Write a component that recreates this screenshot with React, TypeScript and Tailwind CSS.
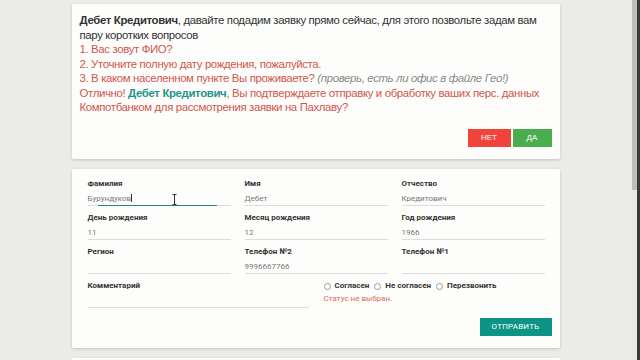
import React from "react";

const Field = ({ label, value, focused }: { label: string; value?: string; focused?: boolean }) => (
  <div className="flex flex-col">
    <div className="text-[8px] font-bold leading-[10px] text-[#333]">{label}</div>
    <div className="relative mt-[4px] h-[13px] border-b border-[#dcdcdc] text-[8px] leading-[12px] text-[#777]">
      <span>{value ?? "\u00a0"}</span>
      {focused && (
        <>
          <span className="inline-block h-[8px] w-px bg-[#333] align-[-1px]" />
          <div className="absolute left-[10px] bottom-[-1px] h-[1px] w-[119px] bg-[#26877c]" />
          <svg className="absolute left-[84px] top-[1px]" width="5" height="11" viewBox="0 0 5 11">
            <path d="M0.5 0.5h4M2.5 0.5v10M0.5 10.5h4" stroke="#333" strokeWidth="1" fill="none" />
          </svg>
        </>
      )}
    </div>
  </div>
);

const Radio = ({ label }: { label: string }) => (
  <div className="flex items-center gap-[4px]">
    <span className="inline-block h-[7px] w-[7px] rounded-full border border-[#9a9a9a] bg-white" />
    <span className="text-[8px] font-bold leading-[10px] text-[#333]">{label}</span>
  </div>
);

export default function App() {
  return (
    <div className="flex h-[360px] w-[640px] overflow-hidden bg-[#ebecea]">
      <div className="flex w-[631px] flex-col items-center gap-[10px] pt-[4px]">
        <div
          className="w-[488px] rounded-[2px] bg-[#fdfdfc] px-[8px] pb-[12px] pt-[9px] text-[11.4px] leading-[14.5px] tracking-[-0.35px] shadow-[0_1px_3px_rgba(0,0,0,0.18)]"
          style={{ fontFamily: '"Liberation Sans", Arial, sans-serif' }}
        >
          <div className="text-[#333]">
            <b>Дебет Кредитович</b>, давайте подадим заявку прямо сейчас, для этого позвольте задам вам пару коротких вопросов
          </div>
          <div className="text-[#d0564b]">1. Вас зовут ФИО?</div>
          <div className="text-[#d0564b]">2. Уточните полную дату рождения, пожалуйста.</div>
          <div className="text-[#d0564b]">
            3. В каком населенном пункте Вы проживаете?{" "}
            <i className="text-[#8a8a8a]">(проверь, есть ли офис в файле Гео!)</i>
          </div>
          <div className="text-[#d0564b]">
            Отлично! <b className="text-[#1f9488]">Дебет Кредитович</b>, Вы подтверждаете отправку и обработку ваших перс. данных Компотбанком для рассмотрения заявки на Пахлаву?
          </div>
          <div className="mt-[14.5px] flex justify-end gap-[2px] tracking-normal">
            <div className="flex h-[18px] w-[43px] items-center justify-center bg-[#f0443a] text-[8px] text-white">НЕТ</div>
            <div className="flex h-[18px] w-[39px] items-center justify-center bg-[#4aad4e] text-[8px] text-white">ДА</div>
          </div>
        </div>

        <div
          className="w-[488px] rounded-[2px] bg-[#fdfdfc] pb-[12px] pl-[16px] pr-[8px] pt-[10px] shadow-[0_1px_3px_rgba(0,0,0,0.18)]"
          style={{ fontFamily: 'Roboto, "Liberation Sans", sans-serif' }}
        >
          <div className="grid w-[457px] grid-cols-3 gap-x-[14px] gap-y-[7px]">
            <Field label="Фамилия" value="Бурундуков" focused />
            <Field label="Имя" value="Дебет" />
            <Field label="Отчество" value="Кредитович" />
            <Field label="День рождения" value="11" />
            <Field label="Месяц рождения" value="12" />
            <Field label="Год рождения" value="1966" />
            <Field label="Регион" />
            <Field label="Телефон №2" value="9996667766" />
            <Field label="Телефон №1" />
          </div>
          <div className="mt-[7px] flex w-[457px] gap-[15px]">
            <div className="w-[221px]">
              <Field label="Комментарий" />
              <div className="h-[1px]" />
            </div>
            <div className="flex flex-col">
              <div className="flex gap-[5px]">
                <Radio label="Согласен" />
                <Radio label="Не согласен" />
                <Radio label="Перезвонить" />
              </div>
              <div className="mt-[3px] text-[8px] leading-[10px] text-[#e0675a]">Статус не выбран.</div>
            </div>
          </div>
          <div className="mt-[9px] flex justify-end">
            <div className="flex h-[18px] w-[72px] items-center justify-center bg-[#0d9484] text-[8px] tracking-[0.2px] text-white">ОТПРАВИТЬ</div>
          </div>
        </div>

        <div className="h-[40px] w-[488px] shrink-0 rounded-[2px] bg-[#fdfdfc] shadow-[0_1px_3px_rgba(0,0,0,0.18)]" />
      </div>
      <div className="flex w-[9px]">
        <div className="w-[6px] bg-[#e9eae8]">
          <div className="ml-[1px] h-[190px] w-[5px] bg-[#bdbfbc]" />
        </div>
        <div className="w-[3px] bg-[#3a3a3a]" />
      </div>
    </div>
  );
}
